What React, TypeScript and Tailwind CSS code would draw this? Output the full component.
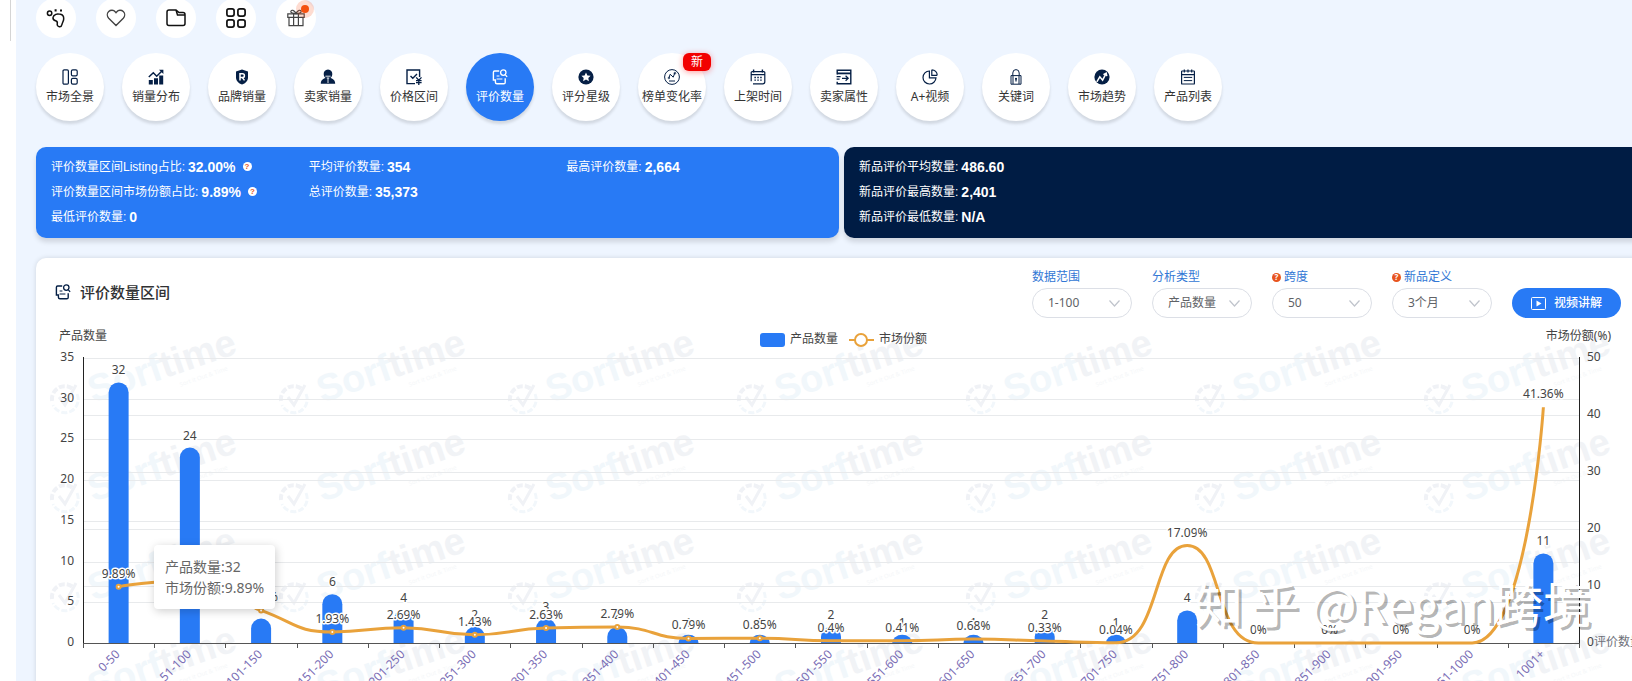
import { useLayoutEffect, useRef, useState } from "react";
import type { ReactNode } from "react";

const NAVY = "#051f45";

const ranges = [
    "0-50", "51-100", "101-150", "151-200", "201-250", "251-300", "301-350",
    "351-400", "401-450", "451-500", "501-550", "551-600", "601-650", "651-700",
    "701-750", "751-800", "801-850", "851-900", "901-950", "951-1000", "1001+",
];
const counts = [32, 24, 3, 6, 4, 2, 3, 2, 1, 1, 2, 1, 1, 2, 1, 4, 0, 0, 0, 0, 11];
const shares = [9.89, 10.97, 5.72, 1.93, 2.69, 1.43, 2.63, 2.79, 0.79, 0.85, 0.4, 0.41, 0.68, 0.33, 0.04, 17.09, 0, 0, 0, 0, 41.36];

function Svg({ size = 16, children }: { size?: number; children: ReactNode }) {
    return <svg width={size} height={size} viewBox="0 0 16 16" fill="none" stroke="currentColor" strokeWidth="1.2" aria-hidden="true">
        {children}
    </svg>
}

const ReviewIcon = ({ size = 16 }: { size?: number }) => (
    <Svg size={size}>
        <path d="M7.2 2H2.600Q1.400 2 1.400 3.200V11h2v2.300q0 1.500 1.600 1.500h6.800q1.400 0 1.400-1.400V9.200" strokeWidth="1.400" />
        <circle cx="11.300" cy="3.600" r="2.700" strokeWidth="1.300" />
        <path d="M13.200 5.600l1.900 2.300" strokeWidth="1.300" />
        <path d="M4.600 7h2.800M4.600 10h5.800" />
    </Svg>
)

const tabs: { label: string; icon: ReactNode; isNew?: boolean }[] = [
    {
        label: "市场全景",
        icon: <Svg><rect x="1" y=".8" width="5.4" height="14.4" rx="1.2" /><rect x="9.4" y=".8" width="5.8" height="6" rx="1.4" /><rect x="9.4" y="9.4" width="5.8" height="5.8" rx="1.4" /></Svg>,
    },
    {
        label: "销量分布",
        icon: <Svg>
            <path d="M.8 11h4v4.4h-4zM6 9.2h4v6.2H6zM11.2 6.4h4v9h-4z" fill="currentColor" stroke="none" />
            <path d="M.8 8l4.5-4.2 3.4 3.4 5-5" strokeWidth="1.5" />
            <path d="M11 .8h4.4V5z" fill="currentColor" stroke="none" />
        </Svg>,
    },
    {
        label: "品牌销量",
        icon: <Svg>
            <path d="M8 .4l6 2v6.2c0 3.4-2.6 5.8-6 7-3.400-1.200-6-3.600-6-7V2.400z" fill="currentColor" stroke="none" />
            <path d="M6 11.400V4.800h2.500a1.900 1.900 0 0 1 0 3.800H6M8.300 8.600l2.200 2.800" stroke="#fff" strokeWidth="1.500" />
        </Svg>,
    },
    {
        label: "卖家销量",
        icon: <Svg>
            <path d="M8 .6c3 0 4.300 2.200 4.300 4.400 0 1.900-.9 3.200-1.900 4.100 2.700.8 4.800 2.300 4.800 5.700H.8c0-3.400 2.100-4.900 4.800-5.700-1-.9-1.900-2.200-1.900-4.100C3.700 2.800 5 .6 8 .6z" fill="currentColor" stroke="none" />
            <path d="M5.400 7.200h5.200M8 9v5M6.700 9h2.600" stroke="#fff" strokeWidth=".9" />
        </Svg>,
    },
    {
        label: "价格区间",
        icon: <Svg>
            <path d="M13.600 8V1H1v13.600h8" strokeWidth="1.400" />
            <path d="M4.500 7l2.300 2.300 4.200-4.200" strokeWidth="1.400" />
            <path d="M10.200 8.400l2.600 2.900 2.700-2.900M10 11.600h5.600M10 13.600h5.600M12.800 11v5" strokeWidth="1.300" />
        </Svg>,
    },
    { label: "评价数量", icon: <ReviewIcon /> },
    {
        label: "评分星级",
        icon: <Svg><circle cx="8" cy="8" r="7.600" fill="currentColor" stroke="none" /><path d="M8 3.400l1.400 3 3.200.4-2.300 2.200.6 3.200L8 10.600l-2.900 1.600.6-3.200L3.400 6.800l3.200-.4z" fill="#fff" stroke="none" /></Svg>,
    },
    {
        label: "榜单变化率",
        isNew: true,
        icon: <Svg><circle cx="8" cy="8" r="7.400" strokeWidth="1" /><path d="M5 8.800l1.200-3.600 3 3L10.800 4M5 12h6" strokeWidth="1" /><circle cx="10.900" cy="4.200" r=".9" strokeWidth=".8" /><circle cx="4.900" cy="9" r=".8" strokeWidth=".8" /></Svg>,
    },
    {
        label: "上架时间",
        icon: <Svg>
            <path d="M3 14.800h9.800q2 0 2-2V3.600q0-1-1-1H2.200q-1 0-1 1v8.700M1.200 5.600h13.600" />
            <path d="M3.600.6v3M12.400.6v3" strokeWidth="1.400" />
            <path d="M4.400 8.500h1.500M7.300 8.500h1.500M10.200 8.500h1.500M4.400 11.200h1.500M7.300 11.200h1.500M10.200 11.200h1.500" strokeWidth="1.300" />
        </Svg>,
    },
    {
        label: "卖家属性",
        icon: <Svg><path d="M1.200 5.500V1.200h13.600v13.600H1.200v-2" strokeWidth="1.400" /><path d="M1 4.400h14" strokeWidth="1.800" /><path d="M.6 7.600h4M.6 10.200h3M6 9.300h6M9.600 6.800l2.600 2.500-2.600 2.500" /></Svg>,
    },
    {
        label: "A+视频",
        icon: <Svg><path d="M7.400 2A6.500 6.500 0 1 0 14 8.800H7.400z" /><path d="M9.800.8v5.500h5.400M9.800.8a5.400 5.400 0 0 1 5.400 5.500" /></Svg>,
    },
    {
        label: "关键词",
        icon: <Svg><path d="M3 6.600h10v8.600H3zM4.800 6.400V4a3.200 3.400 0 0 1 6.400 0v2.400M5 7v8M11 7v8" strokeWidth="1" /><path d="M8 9v3.600" strokeWidth="1.200" /><circle cx="8" cy="9.800" r="1" fill="currentColor" stroke="none" /></Svg>,
    },
    {
        label: "市场趋势",
        icon: <Svg><circle cx="8" cy="8" r="7.600" fill="currentColor" stroke="none" /><path d="M2.800 12.800l3-5 2.800 3.400 3.400-6.600M9.400 5.600l2.800-1.400.6 3" stroke="#fff" strokeWidth="1.500" /></Svg>,
    },
    {
        label: "产品列表",
        icon: <Svg><rect x="1.600" y="2" width="12.800" height="13" rx=".6" /><path d="M4.300.4v3M8 .4v3M11.700.4v3M1.600 5.600h12.800" /><path d="M3.800 8.400h8.400M3.800 11.600h8.400" strokeWidth="1" /></Svg>,
    },
];

const shortcuts: { label: string; icon: ReactNode; dot?: boolean }[] = [
    {
        label: "足迹",
        icon: <svg width="20" height="20" viewBox="0 0 20 20" fill="none" stroke="#111" strokeWidth="1.500">
            <circle cx="3.600" cy="5.200" r="2.200" />
            <path d="M9.800 6.400c1.900-.9 3.200-.2 4.600-.1 2.400.3 3.400 2.400 3.300 4.700-.1 2.300-1.400 3.600-1.800 5.600-.3 1.500-1.300 2.300-2.600 2.100-1.900-.3-2.300-1.800-2-3.300.3-1.600-.4-2.300-1.700-2.700C7.800 12.200 6.800 11.200 7 9.500c.2-1.400 1.300-2.400 2.800-3.100z" />
            <path d="M9.600 1.200v2.200M15 1.400v2.200" strokeWidth="2" />
        </svg>,
    },
    {
        label: "收藏",
        icon: <svg width="20" height="20" viewBox="0 0 20 20" fill="none" stroke="#444" strokeWidth="1.400">
            <path d="M10 17.600L2.700 10.200C.9 8.200.9 5.200 2.700 3.500 4.600 1.700 7.600 1.800 9.200 3.700l.8.900.8-.9c1.600-1.900 4.600-2 6.500-.2 1.800 1.700 1.800 4.700 0 6.700z" />
        </svg>,
    },
    {
        label: "文件夹",
        icon: <svg width="20" height="20" viewBox="0 0 20 20" fill="none" stroke="#111" strokeWidth="1.500">
            <path d="M1 4q0-2 2-2h7l3 2.500h4q2 0 2 2V15.500q0 2-2 2H3q-2 0-2-2zM10 2l1.500 5H19" />
        </svg>,
    },
    {
        label: "应用",
        icon: <svg width="20" height="20" viewBox="0 0 20 20" fill="none" stroke="#111" strokeWidth="1.700">
            <rect x=".9" y=".9" width="7.200" height="7.200" rx="2" /><rect x="11.900" y=".9" width="7.200" height="7.200" rx="2" />
            <rect x=".9" y="11.900" width="7.200" height="7.200" rx="2" /><rect x="11.900" y="11.900" width="7.200" height="7.200" rx="2" />
        </svg>,
    },
    {
        label: "礼物",
        dot: true,
        icon: <svg width="18" height="18" viewBox="0 0 18 18" fill="none" stroke="#444" strokeWidth="1.200">
            <path d="M.8 4.800h16.400v3.600H.8zM2 8.400h14v8.200H2zM6.600 4.800v11.800M11.400 4.800v11.800" />
            <path d="M9 4.600C7.500 1 4 .3 3.800 2.600c0 1.300 1.400 2 5.200 2zM9 4.600C10.500 1 14 .3 14.200 2.600c0 1.300-1.400 2-5.200 2z" />
        </svg>,
    },
];

const filters = [
    { id: "scope", label: "数据范围", options: ["1-100"], help: false },
    { id: "type", label: "分析类型", options: ["产品数量"], help: false },
    { id: "span", label: "跨度", options: ["50"], help: true },
    { id: "newdef", label: "新品定义", options: ["3个月"], help: true },
];

function Help({ light }: { light?: boolean }) {
    return <span className={`flex h-[9px] w-[9px] shrink-0 items-center justify-center rounded-full text-[8px] leading-none font-bold ${light ? "bg-white text-[#e8541e]" : "bg-[#e8541e] text-white"}`}>?</span>
}

function Stat({ label, value, help }: { label: string; value: string; help?: boolean }) {
    return <div className="flex h-[25px] items-center whitespace-nowrap">
        <span>{label}:</span>
        <b className="ml-[3px] text-sm">{value}</b>
        {help && <span className="ml-[7px]"><Help light /></span>}
    </div>
}

type Point = [number, number];

// cubic smoothing that keeps every control point inside its segment
function smoothPath(pts: Point[], smooth = 0.5) {
    let d = `M${pts[0][0]} ${pts[0][1]}`;
    let c0: Point = pts[0];
    const clamp = (v: number, a: number, b: number) => Math.max(Math.min(v, Math.max(a, b)), Math.min(a, b));
    for (let i = 1; i < pts.length; i++) {
        const prev = pts[i - 1];
        const cur = pts[i];
        const next = pts[i + 1];
        let c1: Point = cur;
        let nextC0: Point = cur;
        if (next) {
            const lenPrev = Math.hypot(cur[0] - prev[0], cur[1] - prev[1]);
            const lenNext = Math.hypot(next[0] - cur[0], next[1] - cur[1]);
            const ratio = lenNext / (lenPrev + lenNext);
            const vx = next[0] - prev[0];
            const vy = next[1] - prev[1];
            const nx = clamp(cur[0] + vx * smooth * ratio, next[0], cur[0]);
            const ny = clamp(cur[1] + vy * smooth * ratio, next[1], cur[1]);
            c1 = [
                clamp(cur[0] - ((nx - cur[0]) * lenPrev) / lenNext, prev[0], cur[0]),
                clamp(cur[1] - ((ny - cur[1]) * lenPrev) / lenNext, prev[1], cur[1]),
            ];
            nextC0 = [
                cur[0] + ((cur[0] - c1[0]) * lenNext) / lenPrev,
                cur[1] + ((cur[1] - c1[1]) * lenNext) / lenPrev,
            ];
        }
        d += `C${c0[0]} ${c0[1]} ${c1[0]} ${c1[1]} ${cur[0]} ${cur[1]}`;
        c0 = nextC0;
    }
    return d;
}

function Watermark({ x, y }: { x: number; y: number }) {
    return <g transform={`translate(${x} ${y})`}>
        <path d="M-13 2A13 13 0 0 1 8 -10" fill="none" stroke="#f0f2f6" strokeWidth="4" strokeDasharray="6 2" />
        <path d="M12 -5A13 13 0 1 1 -12 6" fill="none" stroke="#f2f7fb" strokeWidth="3" strokeDasharray="6 2" />
        <path d="M-6 -2l6 8L11 -14" fill="none" stroke="#f0f2f6" strokeWidth="3" />
        <g transform="translate(28 4) rotate(-19)">
            <text className="font-['Liberation_Sans',sans-serif] text-[38px] font-bold">
                <tspan fill="#f1f7fb">Sorf</tspan>
                <tspan fill="#f1f3f6">time</tspan>
            </text>
            <text x="88" y="13" fill="#f5f7f9" className="text-[6px]">Sort it Out &amp; Time</text>
        </g>
    </g>
}

function Chart() {
    const box = useRef<HTMLDivElement>(null);
    const [width, setWidth] = useState(1611);

    useLayoutEffect(() => {
        const el = box.current;
        if (!el) return;
        const measure = () => setWidth(el.clientWidth);
        measure();
        const ro = new ResizeObserver(measure);
        ro.observe(el);
        return () => ro.disconnect();
    }, [])

    const left = 47;
    const right = width - 68;
    const top = 40;
    const bottom = 325;
    const step = (right - left) / ranges.length;
    const cx = (i: number) => left + step * (i + 0.5);
    const yCount = (v: number) => bottom - (v / 35) * (bottom - top);
    const yShare = (v: number) => bottom - (v / 50) * (bottom - top);
    const crisp = (v: number) => Math.round(v) + 0.5;
    const points = shares.map((s, i): Point => [cx(i), yShare(s)]);
    const mid = (left + right) / 2;

    return <div ref={box} className="relative">
        <svg width={width} height="400" className="block text-xs" role="img" aria-label="评价数量区间" fill="#444">
            {[0, 1, 2, 3].map((r) => [0, 1, 2, 3, 4, 5, 6].map((c) => (
                <Watermark key={`${r}-${c}`} x={29 + c * 229} y={81 + r * 99} />
            )))}

            {[5, 10, 15, 20, 25, 30, 35].map((v) => (
                <path key={v} d={`M${left} ${crisp(yCount(v))}H${right}`} stroke="#e8eaec" />
            ))}
            {[10, 20, 30, 40].map((v) => (
                <path key={v} d={`M${left} ${crisp(yShare(v))}H${right}`} stroke="#e8eaec" />
            ))}

            <text x="23" y="22">产品数量</text>
            <text x={right + 32} y="22" textAnchor="end">市场份额(%)</text>
            {[0, 5, 10, 15, 20, 25, 30, 35].map((v) => (
                <text key={v} x={left - 9} y={yCount(v) + 3} textAnchor="end">{v}</text>
            ))}
            {[0, 10, 20, 30, 40, 50].map((v) => (
                <text key={v} x={right + 8} y={yShare(v) + 3}>{v}</text>
            ))}
            <text x={right + 15} y={bottom + 3} fill="#6e7079">评价数量</text>

            {/* legend */}
            <rect x={mid - 71} y="15" width="25" height="14" rx="3" fill="#287af5" />
            <text x={mid - 41} y="25">产品数量</text>
            <path d={`M${mid + 18} 22h25`} stroke="#e9a23b" strokeWidth="2" />
            <circle cx={mid + 30} cy="22" r="6" fill="#fff" stroke="#e9a23b" strokeWidth="2" />
            <text x={mid + 48} y="25">市场份额</text>

            {counts.map((c, i) => {
                if (c === 0) return null;
                const y = yCount(c);
                const r = Math.min(10, bottom - y);
                return <path key={i} fill="#287af5" d={`M${cx(i) - 10} ${bottom}V${y + r}a10 ${r} 0 0 1 20 0V${bottom}z`} />
            })}

            <path d={`M${left + 0.5} ${top - 1}V${bottom}M${right + 0.5} ${top - 1}V${bottom}`} stroke="#222" />
            <path d={`M${left} ${bottom + 0.5}H${right}`} stroke="#555" />
            {[...ranges, ""].map((r, i) => (
                <path key={r} d={`M${crisp(left + step * i)} ${bottom}v5`} stroke="#555" />
            ))}

            <g textAnchor="middle" stroke="#fff" strokeWidth="3" paintOrder="stroke" strokeLinejoin="round">
                {counts.map((c, i) => c > 0 && <text key={i} x={cx(i)} y={yCount(c) - 8}>{c}</text>)}
            </g>

            <path d={smoothPath(points)} fill="none" stroke="#e9a23b" strokeWidth="3" />
            {points.slice(0, 10).map(([x, y]) => (
                <circle key={x} cx={x} cy={y} r="2" fill="#fff" stroke="#e9a23b" strokeWidth="2" />
            ))}

            <g textAnchor="middle" stroke="#fff" strokeWidth="3" paintOrder="stroke" strokeLinejoin="round">
                {shares.map((s, i) => <text key={i} x={cx(i)} y={yShare(s) - 9}>{s}%</text>)}
            </g>

            {ranges.map((r, i) => (
                <text key={r} textAnchor="end" fill="#7a6db5" transform={`translate(${cx(i) + 2} ${bottom + 12}) rotate(-45)`}>{r}</text>
            ))}
        </svg>

        <div className="absolute top-[227px] left-[118px] rounded-sm bg-white px-[11px] py-[11px] text-sm leading-[21px] whitespace-nowrap text-[#666] shadow-[1px_2px_10px_rgba(0,0,0,0.2)]">
            <div>产品数量:32</div>
            <div>市场份额:9.89%</div>
        </div>

        <div className="pointer-events-none absolute top-[251px] right-[56px] flex text-[48px] leading-[66px] whitespace-nowrap text-white [text-shadow:3px_3px_0_rgba(0,0,0,0.3)] font-['Noto_Sans_CJK_SC',sans-serif]">
            <span className="mr-2">知</span>
            <span className="mr-3">乎</span>
            <span>@Regan跨境</span>
        </div>
    </div>
}

export default function App() {
    const [active, setActive] = useState("评价数量");

    return <div className="flex h-screen overflow-hidden bg-white font-['Noto_Sans','Noto_Sans_CJK_SC',sans-serif] text-[#333]">
        <aside className="w-4 shrink-0">
            <div className="h-[41px] w-[11px] border-r border-[#d5d5d5]" />
        </aside>

        <main className="min-w-0 flex-1 overflow-hidden bg-[#eef5ff] pl-5">
            <div className="-mt-0.5 flex gap-5">
                {shortcuts.map((s) => (
                    <button key={s.label} aria-label={s.label} className="relative flex h-10 w-10 items-center justify-center rounded-full bg-white">
                        {s.icon}
                        {s.dot && <span className="absolute top-0.5 right-0.5 h-[18px] w-[18px] rounded-full bg-[#f9511a]/20 p-[5px]">
                            <span className="block h-2 w-2 rounded-full bg-[#f4510f]" />
                        </span>}
                    </button>
                ))}
            </div>

            <nav className="mt-[15px] flex gap-[18px]">
                {tabs.map((t) => (
                    <button key={t.label} onClick={() => setActive(t.label)}
                        className={`relative flex h-[68px] w-[68px] shrink-0 flex-col items-center rounded-full pt-4 text-xs leading-4 whitespace-nowrap shadow-[0_3px_3px_rgba(0,0,0,0.12)] ${active === t.label ? "bg-[#287af5] text-white" : "bg-white text-[#333]"}`}>
                        <span style={{ color: active === t.label ? "#fff" : NAVY }}>{t.icon}</span>
                        <span className="mt-1">{t.label}</span>
                        {t.isNew && <span className="absolute top-0 left-[45px] h-[18px] w-7 rounded-md bg-[#f20000] text-xs leading-[17px] text-white shadow-[0_1px_6px_rgba(255,0,0,0.4)]">新</span>}
                    </button>
                ))}
            </nav>

            <div className="-mr-[15px]">
                <section className="mt-[26px] flex gap-[5px] text-xs text-white font-['Liberation_Sans','Noto_Sans_CJK_SC',sans-serif]">
                    <div className="grid flex-1 grid-cols-3 rounded-[10px] bg-[#287af5] px-[15px] pt-[7px] pb-[9px] shadow-[0_4px_5px_rgba(0,0,0,0.13)]">
                        <div>
                            <Stat label="评价数量区间Listing占比" value="32.00%" help />
                            <Stat label="评价数量区间市场份额占比" value="9.89%" help />
                            <Stat label="最低评价数量" value="0" />
                        </div>
                        <div>
                            <Stat label="平均评价数量" value="354" />
                            <Stat label="总评价数量" value="35,373" />
                        </div>
                        <div>
                            <Stat label="最高评价数量" value="2,664" />
                        </div>
                    </div>
                    <div className="flex-1 rounded-[10px] bg-[#001c44] px-[15px] pt-[7px] pb-[9px] shadow-[0_4px_5px_rgba(0,0,0,0.13)]">
                        <Stat label="新品评价平均数量" value="486.60" />
                        <Stat label="新品评价最高数量" value="2,401" />
                        <Stat label="新品评价最低数量" value="N/A" />
                    </div>
                </section>

                <section className="mt-5 rounded-[10px] bg-white shadow-[0_0_5px_rgba(0,0,0,0.13)]">
                    <div className="flex items-end gap-5 pt-2.5 pr-[26px] pl-[19px]">
                        <h2 className="mr-auto mb-4 flex items-center gap-[9px] text-[15px] leading-5 font-medium text-[#303133]">
                            <span style={{ color: NAVY }}><ReviewIcon /></span>
                            评价数量区间
                        </h2>
                        {filters.map((f) => (
                            <div key={f.id} className="w-[100px]">
                                <label htmlFor={f.id} className="mb-0.5 flex items-center gap-[3px] text-xs leading-[18px] text-[#3277d5]">
                                    {f.help && <Help />}
                                    {f.label}
                                </label>
                                <div className="relative">
                                    <select id={f.id} className="block h-[30px] w-full appearance-none rounded-full border border-[#dcdfe6] bg-white pl-[15px] text-xs text-[#606266]">
                                        {f.options.map((o) => <option key={o}>{o}</option>)}
                                    </select>
                                    <svg className="pointer-events-none absolute top-3 right-3" width="11" height="7" fill="none" stroke="#c0c4cc" strokeWidth="1.200">
                                        <path d="M.5.5l5 5.500 5-5.500" />
                                    </svg>
                                </div>
                            </div>
                        ))}
                        <button className="flex h-[30px] items-center gap-2 rounded-full bg-[#287af5] px-[19px] text-xs font-medium whitespace-nowrap text-white">
                            <svg width="15" height="13" fill="none" stroke="#fff">
                                <rect x=".5" y=".5" width="14" height="12" rx="1" />
                                <path d="M5.500 3.500v6l5-3z" fill="#fff" stroke="none" />
                            </svg>
                            视频讲解
                        </button>
                    </div>
                    <Chart />
                </section>
            </div>
        </main>
    </div>
}
